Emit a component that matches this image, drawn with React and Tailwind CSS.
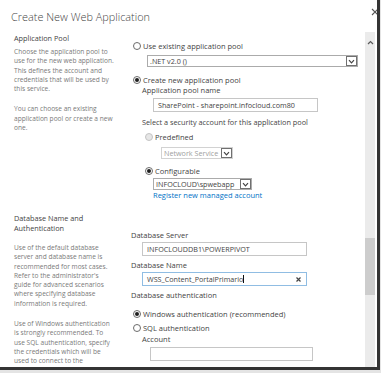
import React from 'react'

function Radio({ checked, disabled }) {
  return (
    <span
      className={`grid h-[8px] w-[8px] shrink-0 place-items-center rounded-full border ${
        disabled ? 'border-[#c4c4c4] bg-[#e6e6e6]' : 'border-[#6b6b6b] bg-white'
      }`}
    >
      {checked && <span className="h-[4px] w-[4px] rounded-full bg-[#1e1e1e]" />}
    </span>
  )
}

function Chevron({ up, color = '#444' }) {
  return (
    <svg width="7" height="5" viewBox="0 0 7 5" fill="none">
      <polyline
        points={up ? '1,4 3.5,1.5 6,4' : '1,1.2 3.5,3.8 6,1.2'}
        stroke={color}
        strokeWidth="1.2"
      />
    </svg>
  )
}

function Select({ value, className, disabled }) {
  return (
    <div
      className={`flex h-[12px] items-center border bg-white pl-[2px] text-[7.2px] ${
        disabled ? 'border-[#d2d2d2] text-[#a0a0a0]' : 'border-[#ababab] text-[#444]'
      } ${className}`}
    >
      <span className="flex-1 overflow-hidden whitespace-nowrap leading-[10px]">{value}</span>
      <span className="grid h-[10px] w-[11px] shrink-0 place-items-center border border-[#707070] bg-white">
        <Chevron />
      </span>
    </div>
  )
}

function TextBox({ value, className, focused }) {
  return (
    <div
      className={`flex h-[14px] items-center border bg-white pl-[4px] pr-[5px] text-[7.2px] ${
        focused ? 'border-[#90bde3]' : 'border-[#c6c6c6]'
      } ${className}`}
    >
      <span className="whitespace-nowrap leading-[10px]">{value}</span>
      {focused && (
        <>
          <span className="h-[8px] w-px bg-[#111]" />
          <span className="flex-1" />
          <svg width="5" height="5" viewBox="0 0 5 5">
            <path d="M0.5 0.5 L4.5 4.5 M4.5 0.5 L0.5 4.5" stroke="#444" strokeWidth="1.2" />
          </svg>
        </>
      )}
    </div>
  )
}

function RadioRow({ checked, disabled, label, className }) {
  return (
    <div className={`flex h-[10px] items-center gap-[2px] ${className}`}>
      <Radio checked={checked} disabled={disabled} />
      <span className="whitespace-nowrap">{label}</span>
    </div>
  )
}

export default function App() {
  return (
    <div className="h-[373px] w-[381px] overflow-hidden bg-[#e4e4e4] font-['Open_Sans','Noto_Sans',sans-serif]">
      <div className="relative flex h-[370px] w-[380px] overflow-hidden border-b-[3px] border-r-[3px] border-[#343434] bg-white">
        <div className="min-w-0 flex-1">
          <h1 className="whitespace-nowrap pl-[11px] pt-[10px] text-[10.9px] font-light leading-[14px] text-[#444]">
            Create New Web Application
          </h1>

          <div className="flex">
            <div className="w-[131px] shrink-0 pl-[14px]">
              <h2 className="mt-[9px] whitespace-nowrap text-[7.3px] leading-[10px] text-[#444]">Application Pool</h2>
              <p className="mt-[4px] whitespace-nowrap text-[6.6px] leading-[9.3px] text-[#7a7a7a]">
                Choose the application pool to
                <br />
                use for the new web application.
                <br />
                This defines the account and
                <br />
                credentials that will be used by
                <br />
                this service.
              </p>
              <p className="mt-[11px] whitespace-nowrap text-[6.6px] leading-[9.3px] text-[#7a7a7a]">
                You can choose an existing
                <br />
                application pool or create a new
                <br />
                one.
              </p>
            </div>

            <div className="flex-1 text-[7.5px] leading-[10px] text-[#444]">
              <RadioRow className="mt-[17px] pl-[2px]" label="Use existing application pool" />
              <Select className="ml-[16px] mt-[4px] w-[211px]" value=".NET v2.0 ()" />
              <RadioRow checked className="mt-[8px] pl-[2px]" label="Create new application pool" />
              <div className="ml-[11px] whitespace-nowrap">Application pool name</div>
              <TextBox className="ml-[22px] mt-[3px] w-[165px]" value="SharePoint - sharepoint.infocloud.com80" />
              <div className="ml-[11px] mt-[5px] whitespace-nowrap text-[7.3px]">Select a security account for this application pool</div>
              <RadioRow disabled className="ml-[14px] mt-[5px]" label="Predefined" />
              <Select disabled className="ml-[30px] mt-[5px] w-[72px]" value="Network Service" />
              <RadioRow checked className="ml-[14px] mt-[7px]" label="Configurable" />
              <Select className="ml-[22px] mt-[2px] w-[99px]" value="INFOCLOUD\spwebapp" />
              <div className="ml-[22px] whitespace-nowrap text-[#0072c6]">Register new managed account</div>
            </div>
          </div>

          <div className="mt-[13px] flex">
            <div className="w-[131px] shrink-0 pl-[14px]">
              <h2 className="whitespace-nowrap text-[7.3px] leading-[10px] text-[#444]">
                Database Name and
                <br />
                Authentication
              </h2>
              <p className="mt-[10px] whitespace-nowrap text-[6.6px] leading-[9.3px] text-[#7a7a7a]">
                Use of the default database
                <br />
                server and database name is
                <br />
                recommended for most cases.
                <br />
                Refer to the administrator's
                <br />
                guide for advanced scenarios
                <br />
                where specifying database
                <br />
                information is required.
              </p>
              <p className="mt-[11px] whitespace-nowrap text-[6.6px] leading-[9.3px] text-[#7a7a7a]">
                Use of Windows authentication
                <br />
                is strongly recommended. To
                <br />
                use SQL authentication, specify
                <br />
                the credentials which will be
                <br />
                used to connect to the
              </p>
            </div>

            <div className="flex-1 text-[7.5px] leading-[10px] text-[#444]">
              <div className="mt-[17px] whitespace-nowrap">Database Server</div>
              <TextBox className="ml-[11px] mt-[2px] w-[165px]" value="INFOCLOUDDB1\POWERPIVOT" />
              <div className="mt-[4px] whitespace-nowrap">Database Name</div>
              <TextBox focused className="ml-[11px] mt-[2px] w-[165px]" value="WSS_Content_PortalPrimario" />
              <div className="mt-[4px] whitespace-nowrap">Database authentication</div>
              <RadioRow checked className="mt-[9px] pl-[2px]" label="Windows authentication (recommended)" />
              <RadioRow className="mt-[4px] pl-[2px]" label="SQL authentication" />
              <div className="ml-[11px] mt-[1px] whitespace-nowrap">Account</div>
              <TextBox className="ml-[19px] mt-[3px] w-[163px]" value="" />
              <div className="ml-[11px] mt-[3px] whitespace-nowrap">Password</div>
            </div>
          </div>
        </div>

        <div className="mr-[2px] mt-[32px] flex w-[10px] shrink-0 flex-col items-center bg-[#ebebeb]">
          <div className="mt-[8px]">
            <Chevron up color="#5a5a5a" />
          </div>
          <div className="mt-[193px] h-[57px] w-full bg-[#cdcdcd]" />
        </div>

        <svg className="absolute left-[371px] top-[8px]" width="8" height="8" viewBox="0 0 8 8">
          <path d="M1 1 L7 7 M7 1 L1 7" stroke="#555" strokeWidth="1.1" />
        </svg>
      </div>
    </div>
  )
}
